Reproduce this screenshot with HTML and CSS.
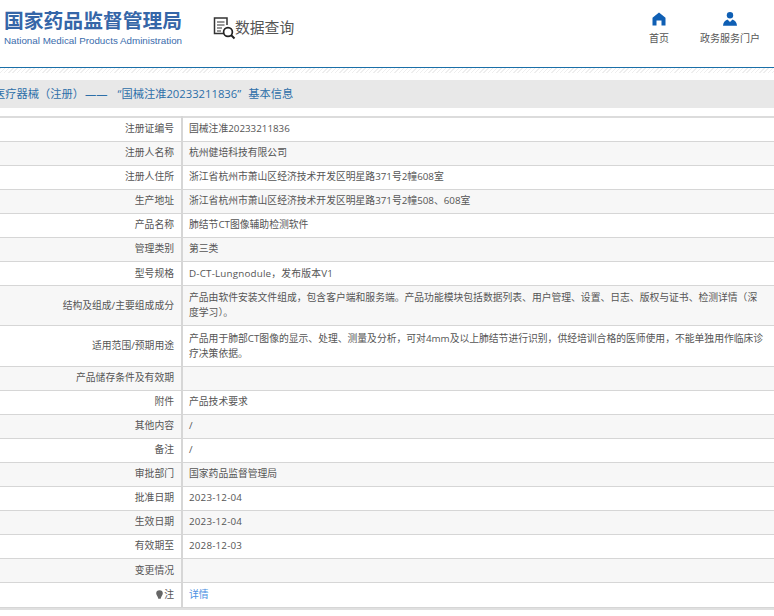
FILE: index.html
```html
<!DOCTYPE html>
<html lang="zh-CN">
<head>
<meta charset="utf-8">
<title>数据查询</title>
<link rel="stylesheet" href="styles.css">
</head>
<body>
<header class="header">
  <div class="logo">
    <div class="logo-cn">国家药品监督管理局</div>
    <div class="logo-en">National Medical Products Administration</div>
  </div>
  <div class="query">
    <svg class="query-icon" viewBox="0 0 24 24" width="24" height="24" aria-hidden="true">
      <path d="M14 16.500H1.500V1H14V8" fill="none" stroke="#333" stroke-width="1.500"/>
      <path d="M4 5H11.500M4 8H11.500M4 11H9M4 14H8" fill="none" stroke="#333" stroke-width="1.200"/>
      <circle cx="15" cy="15" r="4.400" fill="#fff" stroke="#222" stroke-width="1.700"/>
      <path d="M18 18L21.500 21.500" fill="none" stroke="#222" stroke-width="2"/>
    </svg>
    <span class="query-text">数据查询</span>
  </div>
  <nav class="nav">
    <a class="nav-item home">
      <svg viewBox="0 0 14 14" width="14" height="14" aria-hidden="true">
        <path d="M7 0.500L13.500 5.800V13.500H9.500V8.500H4.500V13.500H0.500V5.800Z" fill="#0f5fb4"/>
      </svg>
      <span>首页</span>
    </a>
    <a class="nav-item portal">
      <svg viewBox="0 0 16 14" width="16" height="14" aria-hidden="true">
        <circle cx="8" cy="3.200" r="3.200" fill="#0f5fb4"/>
        <path d="M1 13.800C1.200 10.500 2.800 8.500 5.500 7.500L8 10L10.500 7.500C13.200 8.500 14.800 10.500 15 13.800Z" fill="#0f5fb4"/>
      </svg>
      <span>政务服务门户</span>
    </a>
  </nav>
</header>
<div class="rule"></div>
<div class="crumb"><span class="crumb-text">医疗器械（注册）<span class="dash">——</span>“国械注准20233211836”<span class="tail">基本信息</span></span></div>
<table class="info">
  <tr class="first"><th>注册证编号</th><td>国械注准20233211836</td></tr>
  <tr><th>注册人名称</th><td>杭州健培科技有限公司</td></tr>
  <tr><th>注册人住所</th><td>浙江省杭州市萧山区经济技术开发区明星路371号2幢608室</td></tr>
  <tr><th>生产地址</th><td>浙江省杭州市萧山区经济技术开发区明星路371号2幢508、608室</td></tr>
  <tr><th>产品名称</th><td>肺结节CT图像辅助检测软件</td></tr>
  <tr><th>管理类别</th><td>第三类</td></tr>
  <tr class="low"><th>型号规格</th><td class="latin">D-CT-Lungnodule，发布版本V1</td></tr>
  <tr class="tall"><th>结构及组成/主要组成成分</th><td>产品由软件安装文件组成，包含客户端和服务端。产品功能模块包括数据列表、用户管理、设置、日志、版权与证书、检测详情（深度学习）。</td></tr>
  <tr class="tall wide"><th>适用范围/预期用途</th><td>产品用于肺部CT图像的显示、处理、测量及分析，可对4mm及以上肺结节进行识别，供经培训合格的医师使用，不能单独用作临床诊疗决策依据。</td></tr>
  <tr><th>产品储存条件及有效期</th><td></td></tr>
  <tr><th>附件</th><td>产品技术要求</td></tr>
  <tr><th>其他内容</th><td>/</td></tr>
  <tr><th>备注</th><td>/</td></tr>
  <tr><th>审批部门</th><td>国家药品监督管理局</td></tr>
  <tr><th>批准日期</th><td class="latin">2023-12-04</td></tr>
  <tr><th>生效日期</th><td class="latin">2023-12-04</td></tr>
  <tr><th>有效期至</th><td class="latin">2028-12-03</td></tr>
  <tr class="low"><th>变更情况</th><td></td></tr>
  <tr class="low last"><th><svg class="bulb" viewBox="0 0 7 9" width="7" height="9" aria-hidden="true"><path d="M3.500 0.200A3.300 3.300 0 0 1 6.800 3.500C6.800 5 5.200 6 4.700 8.800H2.300C1.800 6 0.200 5 0.200 3.500A3.300 3.300 0 0 1 3.500 0.200Z" fill="#666"/></svg>注</th><td><a class="detail">详情</a></td></tr>
</table>
<div class="bottom"></div>
</body>
</html>
```
FILE: styles.css
```css
* { box-sizing: border-box; }
html, body { margin: 0; padding: 0; background: #fff; overflow: hidden; }
body {
  width: 774px;
  height: 616px;
  font-family: "Open Sans", "Noto Sans CJK TC", sans-serif;
  font-size: 9.800px;
  color: #555;
}
.header { display: flex; height: 67px; align-items: flex-start; }
.logo { width: 213px; padding: 7px 0 0 4px; }
.logo-cn {
  font-family: "Noto Sans CJK SC", sans-serif;
  font-size: 19.800px;
  line-height: 26px;
  font-weight: 700;
  color: #3566a8;
  white-space: nowrap;
}
.logo-en {
  font-family: "Liberation Sans", sans-serif;
  font-size: 9.800px;
  line-height: 12px;
  margin-top: 2px;
  color: #3a6cac;
  white-space: nowrap;
}
.query { display: flex; align-items: flex-start; padding-top: 17px; }
.query-icon { display: block; }
.query-text {
  font-family: "Noto Sans CJK SC", sans-serif;
  font-size: 14.800px;
  line-height: 20px;
  font-weight: 400;
  color: #555;
  margin-left: -2px;
}
.nav { margin-left: auto; display: flex; padding-top: 12px; }
.nav-item { display: flex; flex-direction: column; align-items: center; font-size: 10px; color: #555; line-height: 14px; }
.nav-item svg { display: block; }
.home { width: 20px; margin-right: 31px; gap: 5px; }
.portal { width: 60px; margin-right: 14px; gap: 5px; }
.rule {
  height: 6px;
  border-top: 1px solid #1a6fa8;
  background: repeating-linear-gradient(135deg, #eeeeee 0 1px, #fff 1px 3px);
}
.crumb { height: 28px; margin-top: 7px; background: #e8e8e8; overflow: hidden; }
.crumb-text {
  display: block;
  margin-left: -6px;
  font-size: 11.250px;
  line-height: 28px;
  color: #2d6fa8;
  white-space: nowrap;
}
.dash { margin: 0 10px 0 1px; }
.tail { margin-left: 7px; }
.info {
  width: 100%;
  margin-top: 8px;
  border-collapse: collapse;
  table-layout: fixed;
  border-top: 2px solid #dcdcdc;
}
.info tr { height: 24px; }
.info tr:nth-child(odd) { background: #fff; }
.info tr:nth-child(even) { background: #f7f7f7; }
.info tr.tall { height: 40px; }
.info tr.wide { height: 41px; }
.info tr.last { height: 25px; }
.info tr { border-bottom: 1px solid #d6d6d6; }
.info th, .info td {
  padding: 0 8px 2px 6px;
  font-weight: 400;
  line-height: 15px;
  vertical-align: middle;
}
.info tr.first th, .info tr.first td { padding-bottom: 2px; }
.info tr.low th, .info tr.low td { padding-bottom: 0; }
.info tr.tall th, .info tr.tall td { padding-bottom: 0; }
.info th { width: 182px; padding-right: 7px; text-align: right; border-right: 2px solid #d6d6d6; }
.info td { text-align: left; }
.info td.latin { letter-spacing: 0.200px; }
.bulb { margin-right: 1px; vertical-align: -1px; }
.detail { color: #4a90e2; }
.bottom { height: 2px; background: #e0e0e0; }
```
